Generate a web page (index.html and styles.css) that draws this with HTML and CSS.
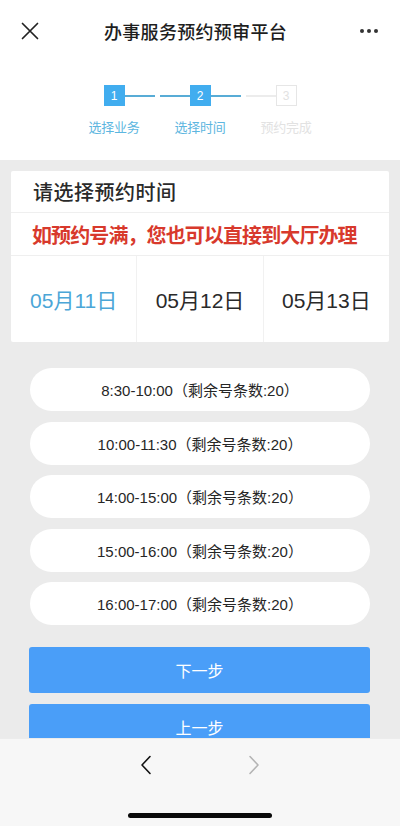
FILE: index.html
```html
<!DOCTYPE html>
<html lang="zh">
<head>
<meta charset="utf-8">
<title>办事服务预约预审平台</title>
<link rel="stylesheet" href="styles.css">
</head>
<body>
<div class="page">
  <header class="topbar">
    <svg class="close" width="18" height="18" viewBox="0 0 18 18"><path d="M1.5 1.5L16.5 16.5M16.5 1.5L1.5 16.5" stroke="#222" stroke-width="1.7" fill="none" stroke-linecap="round"/></svg>
    <div class="title">办事服务预约预审平台</div>
    <div class="more"><span></span><span></span><span></span></div>
  </header>

  <section class="steps">
    <div class="step done">
      <div class="track"><i class="line hidden"></i><b class="box">1</b><i class="line"></i></div>
      <div class="label">选择业务</div>
    </div>
    <div class="step done">
      <div class="track"><i class="line"></i><b class="box">2</b><i class="line"></i></div>
      <div class="label">选择时间</div>
    </div>
    <div class="step todo">
      <div class="track"><i class="line"></i><b class="box">3</b><i class="line hidden"></i></div>
      <div class="label">预约完成</div>
    </div>
  </section>

  <main class="main">
    <div class="card">
      <div class="card-title">请选择预约时间</div>
      <div class="card-notice">如预约号满，您也可以直接到大厅办理</div>
      <div class="dates">
        <div class="date active">05月11日</div>
        <div class="date">05月12日</div>
        <div class="date">05月13日</div>
      </div>
    </div>

    <ul class="slots">
      <li class="slot">8:30-10:00（剩余号条数:20）</li>
      <li class="slot">10:00-11:30（剩余号条数:20）</li>
      <li class="slot">14:00-15:00（剩余号条数:20）</li>
      <li class="slot">15:00-16:00（剩余号条数:20）</li>
      <li class="slot">16:00-17:00（剩余号条数:20）</li>
    </ul>

    <div class="actions">
      <button class="btn">下一步</button>
      <button class="btn">上一步</button>
    </div>
  </main>

  <footer class="toolbar">
    <div class="nav">
      <svg width="12" height="20" viewBox="0 0 12 20"><path d="M10 1.5L2 10L10 18.5" stroke="#111" stroke-width="1.6" fill="none" stroke-linecap="round" stroke-linejoin="round"/></svg>
      <svg width="12" height="20" viewBox="0 0 12 20"><path d="M2 1.5L10 10L2 18.5" stroke="#b4b4b4" stroke-width="1.6" fill="none" stroke-linecap="round" stroke-linejoin="round"/></svg>
    </div>
    <div class="home"></div>
  </footer>
</div>
</body>
</html>
```

FILE: styles.css
```css
* { box-sizing: border-box; }
html, body {
  margin: 0;
  padding: 0;
  height: 826px;
  overflow: hidden;
}
body {
  font-family: "Liberation Sans", "Noto Sans CJK SC", sans-serif;
  color: #333;
  background: #ebebeb;
}
.page {
  width: 400px;
  height: 826px;
  background: #ebebeb;
}

/* top bar */
.topbar {
  height: 62px;
  background: #fff;
  display: flex;
  align-items: center;
  padding: 0 20px 0 21px;
}
.close { flex: none; }
.title {
  flex: 1;
  text-align: center;
  font-size: 18px;
  color: #1e1e1e;
  font-weight: 500;
  letter-spacing: 0.3px;
  padding-left: 2px;
  padding-right: 10px;
}
.more {
  display: flex;
  gap: 3px;
  width: 20px;
}
.more span {
  width: 4px;
  height: 4px;
  border-radius: 50%;
  background: #333;
}

/* steps */
.steps {
  height: 98px;
  background: #fff;
  display: flex;
  justify-content: center;
  padding-top: 23px;
}
.step {
  width: 86px;
  display: flex;
  flex-direction: column;
  align-items: center;
}
.track {
  width: 100%;
  display: flex;
  align-items: center;
}
.line {
  flex: 1;
  height: 2px;
  background: #58acd6;
}
.line.hidden { visibility: hidden; }
.track .line:first-child { margin-left: 2.5px; }
.track .line:last-child { margin-right: 2.5px; }
.box {
  width: 21px;
  height: 21px;
  display: flex;
  align-items: center;
  justify-content: center;
  font-size: 12px;
  font-weight: normal;
  color: #fff;
  background: #41adef;
}
.todo .line { background: #ececec; }
.todo .box {
  background: #fff;
  border: 1px solid #e6e6e6;
  color: #e2e2e2;
}
.label {
  margin-top: 11px;
  font-size: 13px;
  color: #5db6e0;
  letter-spacing: -0.3px;
}
.todo .label { color: #e2e2e2; }

/* main */
.main {
  padding: 11px 11px 0;
}
.card {
  background: #fff;
  border-radius: 2px;
}
.card-title {
  height: 42px;
  display: flex;
  align-items: center;
  padding-left: 22px;
  font-size: 20px;
  font-weight: 500;
  color: #2a2a2a;
  letter-spacing: 0.5px;
  border-bottom: 1px solid #efefef;
}
.card-notice {
  height: 43px;
  display: flex;
  align-items: center;
  padding-left: 21px;
  font-size: 20px;
  font-weight: 700;
  color: #d8392c;
  letter-spacing: -0.9px;
  border-bottom: 1px solid #efefef;
}
.dates {
  display: flex;
  height: 86px;
}
.date {
  flex: 1;
  display: flex;
  align-items: center;
  justify-content: center;
  font-size: 21px;
  color: #2a2a2a;
  border-left: 1px solid #f1f1f1;
}
.date:first-child { border-left: none; }
.date.active { color: #4ba6d7; }

.slots {
  list-style: none;
  margin: 26px 0 0;
  padding: 0 19px;
  display: flex;
  flex-direction: column;
  gap: 10.5px;
}
.slot {
  height: 43px;
  border-radius: 22px;
  background: #fff;
  display: flex;
  align-items: center;
  justify-content: center;
  font-size: 15px;
  color: #262626;
}

.actions {
  margin-top: 22px;
  padding: 0 19px 0 18px;
  display: flex;
  flex-direction: column;
  gap: 11px;
}
.btn {
  height: 46px;
  border: none;
  border-radius: 3px;
  background: #4a9ef8;
  color: #fff;
  font-family: "Liberation Sans", "Noto Sans CJK SC", sans-serif;
  font-size: 16px;
  padding: 0;
}

/* browser toolbar overlay */
.toolbar {
  position: fixed;
  left: 0;
  right: 0;
  bottom: 0;
  height: 88px;
  background: #f7f7f7;
  border-top: 1px solid #ececec;
  display: flex;
  flex-direction: column;
  align-items: center;
}
.nav {
  margin-top: 16px;
  display: flex;
  gap: 96px;
}
.home {
  margin-top: 38px;
  width: 144px;
  height: 5px;
  border-radius: 3px;
  background: #0a0a0a;
}
```
